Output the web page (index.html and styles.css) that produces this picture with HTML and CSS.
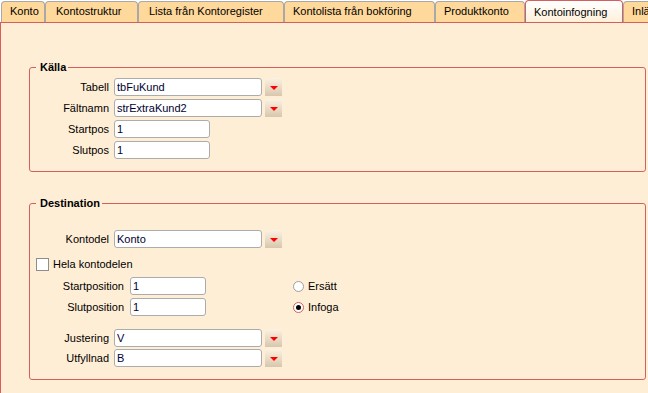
FILE: index.html
```html
<!DOCTYPE html>
<html lang="sv">
<head>
  <meta charset="UTF-8">
  <title>Kontoinfogning</title>
  <link rel="stylesheet" href="styles.css">
</head>
<body>
  <!-- flikar -->
  <div class="tab-strip">
    <div class="tab">Konto</div>
    <div class="tab">Kontostruktur</div>
    <div class="tab">Lista från Kontoregister</div>
    <div class="tab">Kontolista från bokföring</div>
    <div class="tab">Produktkonto</div>
    <div class="tab active">Kontoinfogning</div>
    <div class="tab">Inläsning</div>
  </div>
  <div class="pane">
    <!-- Källa -->
    <fieldset class="group">
      <legend>Källa</legend>
      <div class="row">
        <label class="lbl">Tabell</label>
        <input class="field" type="text" value="tbFuKund">
        <button class="drop"><span class="arrow"></span></button>
      </div>
      <div class="row">
        <label class="lbl">Fältnamn</label>
        <input class="field" type="text" value="strExtraKund2">
        <button class="drop"><span class="arrow"></span></button>
      </div>
      <div class="row">
        <label class="lbl">Startpos</label>
        <input class="field short" type="text" value="1">
      </div>
      <div class="row">
        <label class="lbl">Slutpos</label>
        <input class="field short" type="text" value="1">
      </div>
    </fieldset>
    <!-- Destination -->
    <fieldset class="group dest">
      <legend>Destination</legend>
      <div class="row first">
        <label class="lbl">Kontodel</label>
        <input class="field" type="text" value="Konto">
        <button class="drop"><span class="arrow"></span></button>
      </div>
      <div class="check-row">
        <span class="checkbox"></span>
        <span>Hela kontodelen</span>
      </div>
      <div class="pos-block">
        <div class="pos-fields">
          <div class="row">
            <label class="lbl wide">Startposition</label>
            <input class="field pos" type="text" value="1">
          </div>
          <div class="row">
            <label class="lbl wide">Slutposition</label>
            <input class="field pos" type="text" value="1">
          </div>
        </div>
        <div class="radios">
          <div class="row"><span class="radio"></span>Ersätt</div>
          <div class="row"><span class="radio checked"></span>Infoga</div>
        </div>
      </div>
      <div class="row tight">
        <label class="lbl">Justering</label>
        <input class="field" type="text" value="V">
        <button class="drop"><span class="arrow"></span></button>
      </div>
      <div class="row">
        <label class="lbl">Utfyllnad</label>
        <input class="field" type="text" value="B">
        <button class="drop"><span class="arrow"></span></button>
      </div>
    </fieldset>
  </div>
</body>
</html>
```

FILE: styles.css
```css
body { margin: 0; height: 100vh; background: #fff; font-family: "Liberation Sans", Arial, sans-serif; font-size: 11px; line-height: 13px; color: #000; overflow: hidden; }

/* flikar */
.tab-strip { display: flex; align-items: flex-end; height: 22px; padding-left: 1px; overflow: hidden; }
.tab {
  box-sizing: border-box; height: 21px; padding: 3px 0 0 8px;
  background: #ffd89b; border: 1px solid #a8a8a8; border-bottom: none;
  border-radius: 4px 4px 0 0; white-space: nowrap; overflow: hidden; flex: none;
}
.tab:nth-child(1) { width: 44px; }
.tab:nth-child(2) { width: 93px; padding-left: 10px; }
.tab:nth-child(3) { width: 146px; padding-left: 10px; }
.tab:nth-child(4) { width: 151px; }
.tab:nth-child(5) { width: 90px; }
.tab:nth-child(6) { width: 98px; }
.tab:nth-child(7) { width: 60px; }
.tab.active {
  height: 23px; margin-bottom: -1px; padding-top: 5px; position: relative;
  background: linear-gradient(#ffffff, #ffefd8); border-color: #d65f5b;
}

/* innehåll */
.pane { box-sizing: border-box; height: calc(100vh - 22px); background: #ffeed6; border-top: 1px solid #d65f5b; border-left: 1px solid #d65f5b; padding: 38px 0 0 28px; overflow: hidden; }
.group { box-sizing: border-box; width: 617px; margin: 0; padding: 4px 8px 12px 6px; border: 1px solid #d65f5b; border-radius: 3px; }
.group legend { padding: 0 2px 0 4px; font-weight: bold; }
.group.dest { margin-top: 25px; }

.row { display: flex; align-items: center; height: 18px; margin-bottom: 3px; }
.row:last-child { margin-bottom: 0; }
.row.first { margin-top: 16px; }
.row.tight { margin-bottom: 2px; }
.lbl { width: 73px; margin-right: 5px; text-align: right; flex: none; }
.lbl.wide { width: 88px; margin-right: 6px; }

.field {
  box-sizing: border-box; width: 148px; height: 18px; margin: 0; padding: 0 2px;
  border: 1px solid #acacac; border-radius: 3px; background: #fff;
  font-family: inherit; font-size: 11px; color: #000030; outline: none;
}
.field.short { width: 96px; }
.field.pos { width: 76px; }

.drop {
  width: 17px; height: 18px; margin: 0 0 0 3px; padding: 0; border: none;
  background: linear-gradient(#fcf2e2, #d8c7ae); display: flex; align-items: center; justify-content: center;
}
.arrow { width: 0; height: 0; margin-top: 1px; border-left: 4px solid transparent; border-right: 4px solid transparent; border-top: 4px solid #f00; }

.check-row { display: flex; align-items: center; height: 13px; margin: 10px 0 6px; }
.checkbox { box-sizing: border-box; width: 13px; height: 13px; margin-right: 4px; background: #fff; border: 1px solid #8e8e8e; }

.pos-block { display: flex; margin-bottom: 13px; }
.radios { margin-left: 87px; }
.radio { box-sizing: border-box; width: 11px; height: 11px; margin-right: 4px; border: 1px solid #a0a0a0; border-radius: 50%; background: #fff; display: flex; align-items: center; justify-content: center; }
.radio.checked { border-color: #d0605c; }
.radio.checked::after { content: ""; width: 5px; height: 5px; border-radius: 50%; background: #000; }
```
